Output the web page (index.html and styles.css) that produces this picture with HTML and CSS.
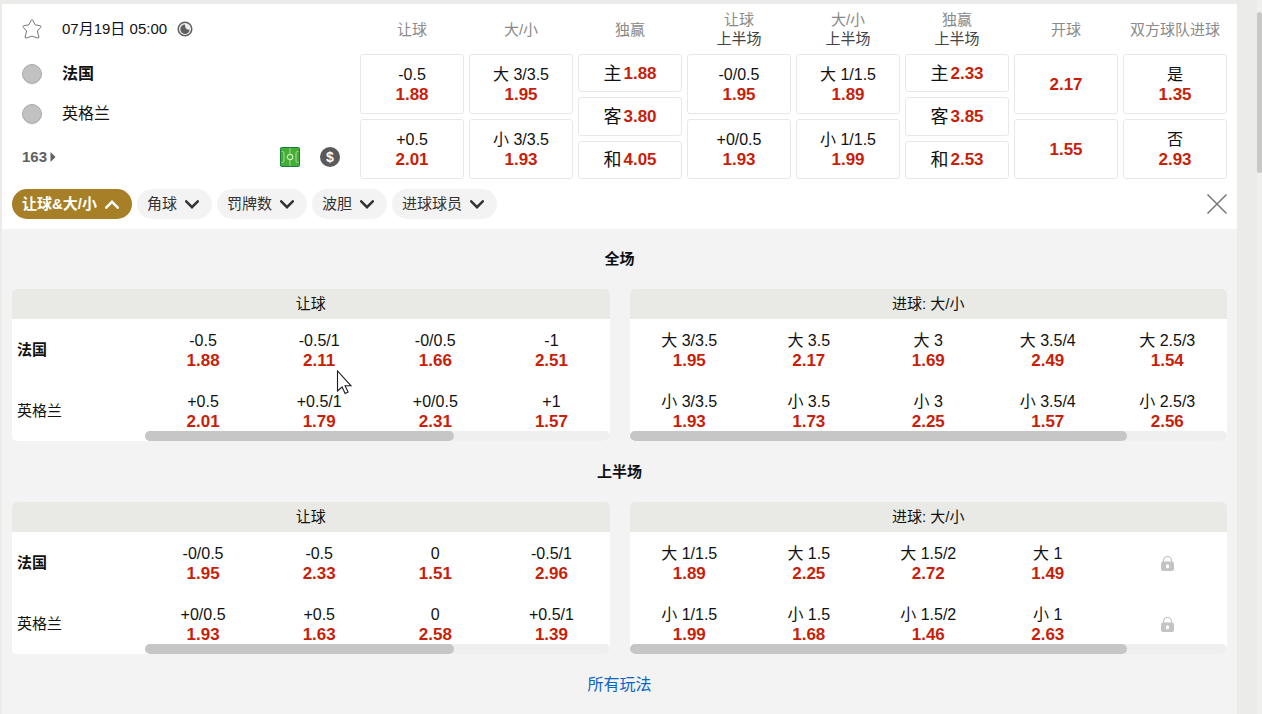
FILE: index.html
```html
<!DOCTYPE html>
<html lang="zh-CN">
<head>
<meta charset="utf-8">
<title>法国 - 英格兰</title>
<link rel="stylesheet" href="styles.css">
</head>
<body>
<svg class="defs" aria-hidden="true">
  <symbol id="down" viewBox="0 0 14 9"><path d="M1.200 1.300 7 7.200l5.800-5.900" fill="none" stroke="currentColor" stroke-width="2.500" stroke-linecap="round"/></symbol>
  <symbol id="up" viewBox="0 0 14 9"><path d="M1.200 7.700 7 1.800l5.800 5.900" fill="none" stroke="currentColor" stroke-width="2.500" stroke-linecap="round"/></symbol>
  <symbol id="lock" viewBox="0 0 13 15"><path d="M2.500 6.500V4.500a4 4 0 0 1 8 0v2" fill="none" stroke="#c4c4c4" stroke-width="1.200"/><rect y="5.500" width="13" height="9.500" rx="2" fill="#c4c4c4"/><rect x="5" y="8.300" width="3" height="4" rx="1.500" fill="#fff"/></symbol>
</svg>
<div class="page">
<main class="board">
  <section class="match">
    <div class="info">
      <div class="kickoff">
        <button class="icon-btn slot" aria-label="收藏"><svg width="20" height="20" viewBox="0 0 20 20"><path d="M9.100 1.300q.9-1.400 1.800 0l2.300 4.600 5 .8q1.500.4.500 1.600l-3.400 3.700 1.600 6q.1 1.400-1.100 1l-5.800-1.800L4.200 19q-1.300.4-1.100-1l1.500-6L1.300 8.300q-1-1.200.4-1.600l5.100-.8z" fill="#fff" stroke="#777" stroke-width="1"/></svg></button>
        <time>07月19日 05:00</time>
        <svg class="clock" width="16" height="16" viewBox="0 0 16 16"><circle cx="8" cy="8" r="6.800" fill="#eee" stroke="#606060" stroke-width="1.500"/><path d="M8 3.500A4.700 4.700 0 1 0 12.700 8.500Q8 9.500 8 3.500z" fill="#606060"/></svg>
      </div>
      <div class="team home"><span class="slot"><i class="crest"></i></span>法国</div>
      <div class="team"><span class="slot"><i class="crest"></i></span>英格兰</div>
      <div class="extras">
        <a class="more" href="#all">163<svg width="6" height="10" viewBox="0 0 6 10"><path d="M.5 0 5.500 5l-5 5z" fill="#606060"/></svg></a>
        <button class="icon-btn" aria-label="比分板"><svg width="20" height="20" viewBox="0 0 20 20"><rect x=".5" y=".5" width="19" height="19" rx="1" fill="#43ad35" stroke="#16803a"/><path d="M1.500 4.500h1q1.500 0 1.500 1.500v8q0 1.500-1.500 1.500h-1M18.500 4.500h-1q-1.500 0-1.500 1.500v8q0 1.500 1.500 1.500h1M10 1v6M10 13v6" fill="none" stroke="#a5dc92"/><circle cx="10" cy="10" r="2.700" fill="none" stroke="#c9efbb" stroke-width="1.200"/></svg></button>
        <button class="icon-btn coin" aria-label="兑现">$</button>
      </div>
    </div>
    <div class="markets">
      <div class="market"><h2>让球</h2><button class="odd"><span>-0.5</span><b>1.88</b></button><button class="odd"><span>+0.5</span><b>2.01</b></button></div>
      <div class="market"><h2>大/小</h2><button class="odd"><span>大 3/3.5</span><b>1.95</b></button><button class="odd"><span>小 3/3.5</span><b>1.93</b></button></div>
      <div class="market win"><h2>独赢</h2><button class="odd"><span>主</span><b>1.88</b></button><button class="odd"><span>客</span><b>3.80</b></button><button class="odd"><span>和</span><b>4.05</b></button></div>
      <div class="market"><h2>让球<small>上半场</small></h2><button class="odd"><span>-0/0.5</span><b>1.95</b></button><button class="odd"><span>+0/0.5</span><b>1.93</b></button></div>
      <div class="market"><h2>大/小<small>上半场</small></h2><button class="odd"><span>大 1/1.5</span><b>1.89</b></button><button class="odd"><span>小 1/1.5</span><b>1.99</b></button></div>
      <div class="market win"><h2>独赢<small>上半场</small></h2><button class="odd"><span>主</span><b>2.33</b></button><button class="odd"><span>客</span><b>3.85</b></button><button class="odd"><span>和</span><b>2.53</b></button></div>
      <div class="market"><h2>开球</h2><button class="odd"><b>2.17</b></button><button class="odd"><b>1.55</b></button></div>
      <div class="market"><h2>双方球队进球</h2><button class="odd"><span>是</span><b>1.35</b></button><button class="odd"><span>否</span><b>2.93</b></button></div>
    </div>
  </section>

  <nav class="tabs">
    <button class="tab active">让球&amp;大/小<svg><use href="#up"/></svg></button>
    <button class="tab">角球<svg><use href="#down"/></svg></button>
    <button class="tab">罚牌数<svg><use href="#down"/></svg></button>
    <button class="tab">波胆<svg><use href="#down"/></svg></button>
    <button class="tab">进球球员<svg><use href="#down"/></svg></button>
    <button class="icon-btn close" aria-label="关闭"><svg width="20" height="20" viewBox="0 0 20 20"><path d="M.5.5l19 19M19.500.5l-19 19" stroke="#777" stroke-width="1.500"/></svg></button>
  </nav>

  <div class="details">
    <section>
      <h3>全场</h3>
      <div class="panels">
        <div class="panel">
          <table>
            <colgroup><col class="name-col"><col><col><col><col></colgroup>
            <thead><tr><th colspan="5">让球</th></tr></thead>
            <tbody>
              <tr><th class="home">法国</th><td><button><span>-0.5</span><b>1.88</b></button></td><td><button><span>-0.5/1</span><b>2.11</b></button></td><td><button><span>-0/0.5</span><b>1.66</b></button></td><td><button><span>-1</span><b>2.51</b></button></td></tr>
              <tr><th>英格兰</th><td><button><span>+0.5</span><b>2.01</b></button></td><td><button><span>+0.5/1</span><b>1.79</b></button></td><td><button><span>+0/0.5</span><b>2.31</b></button></td><td><button><span>+1</span><b>1.57</b></button></td></tr>
            </tbody>
          </table>
          <div class="track named"><div class="thumb two-thirds"></div></div>
        </div>
        <div class="panel">
          <table>
            <thead><tr><th colspan="5">进球: 大/小</th></tr></thead>
            <tbody>
              <tr><td><button><span>大 3/3.5</span><b>1.95</b></button></td><td><button><span>大 3.5</span><b>2.17</b></button></td><td><button><span>大 3</span><b>1.69</b></button></td><td><button><span>大 3.5/4</span><b>2.49</b></button></td><td><button><span>大 2.5/3</span><b>1.54</b></button></td></tr>
              <tr><td><button><span>小 3/3.5</span><b>1.93</b></button></td><td><button><span>小 3.5</span><b>1.73</b></button></td><td><button><span>小 3</span><b>2.25</b></button></td><td><button><span>小 3.5/4</span><b>1.57</b></button></td><td><button><span>小 2.5/3</span><b>2.56</b></button></td></tr>
            </tbody>
          </table>
          <div class="track"><div class="thumb five-sixths"></div></div>
        </div>
      </div>
    </section>
    <section>
      <h3>上半场</h3>
      <div class="panels">
        <div class="panel">
          <table>
            <colgroup><col class="name-col"><col><col><col><col></colgroup>
            <thead><tr><th colspan="5">让球</th></tr></thead>
            <tbody>
              <tr><th class="home">法国</th><td><button><span>-0/0.5</span><b>1.95</b></button></td><td><button><span>-0.5</span><b>2.33</b></button></td><td><button><span>0</span><b>1.51</b></button></td><td><button><span>-0.5/1</span><b>2.96</b></button></td></tr>
              <tr><th>英格兰</th><td><button><span>+0/0.5</span><b>1.93</b></button></td><td><button><span>+0.5</span><b>1.63</b></button></td><td><button><span>0</span><b>2.58</b></button></td><td><button><span>+0.5/1</span><b>1.39</b></button></td></tr>
            </tbody>
          </table>
          <div class="track named"><div class="thumb two-thirds"></div></div>
        </div>
        <div class="panel">
          <table>
            <thead><tr><th colspan="5">进球: 大/小</th></tr></thead>
            <tbody>
              <tr><td><button><span>大 1/1.5</span><b>1.89</b></button></td><td><button><span>大 1.5</span><b>2.25</b></button></td><td><button><span>大 1.5/2</span><b>2.72</b></button></td><td><button><span>大 1</span><b>1.49</b></button></td><td><svg class="lock"><use href="#lock"/></svg></td></tr>
              <tr><td><button><span>小 1/1.5</span><b>1.99</b></button></td><td><button><span>小 1.5</span><b>1.68</b></button></td><td><button><span>小 1.5/2</span><b>1.46</b></button></td><td><button><span>小 1</span><b>2.63</b></button></td><td><svg class="lock"><use href="#lock"/></svg></td></tr>
            </tbody>
          </table>
          <div class="track"><div class="thumb five-sixths"></div></div>
        </div>
      </div>
    </section>
    <a class="all" id="all" href="#all">所有玩法</a>
  </div>
</main>
<div class="page-track"><div class="page-thumb"></div></div>
</div>
<svg class="pointer" width="16" height="25" viewBox="0 0 16 25" aria-hidden="true"><path d="M1.500 1v20l4.600-4 3 6.500 3-1.400-3-6.300h6z" fill="#fff" stroke="#1b1b26" stroke-width="1.100"/></svg>
</body>
</html>
```
FILE: styles.css
```css
* { box-sizing: border-box; }
body {
  margin: 0;
  background: #ebebe9;
  color: #111;
  font: 16px/20px "Liberation Sans", "Noto Sans CJK SC", sans-serif;
}
button { margin: 0; padding: 0; border: 0; background: none; color: inherit; font: inherit; cursor: pointer; }
a { text-decoration: none; }
svg { display: block; flex: none; }
h2, h3 { margin: 0; }
.defs { position: absolute; width: 0; height: 0; }

.page { display: flex; min-height: 100vh; }
.board { flex: 1; display: flex; flex-direction: column; min-width: 0; margin: 4px 20px 0 2px; background: #fff; }
.page-track { width: 5px; padding-top: 12px; background: #f0f0f0; }
.page-thumb { height: 161px; border-radius: 3px; background: #c8c8c8; }

.match { display: flex; padding-right: 10px; }
.info { flex: none; width: 358px; padding: 0 20px; }
.slot { display: flex; width: 40px; }
.icon-btn { flex: none; }
.kickoff { display: flex; align-items: center; height: 50px; font-size: 15px; }
.clock { margin-left: 10px; }
.team { display: flex; align-items: center; height: 40px; }
.home { font-weight: bold; }
.crest { width: 20px; height: 20px; border: 1px solid #aaa; border-radius: 50%; background: #c1c1c1; }
.extras { display: flex; align-items: center; gap: 20px; height: 45px; }
.more { display: flex; align-items: center; gap: 3px; margin-right: auto; color: #606060; font-size: 15px; font-weight: bold; }
.coin { width: 20px; height: 20px; border-radius: 50%; background: #5a5a5a; color: #fff; font-size: 14px; font-weight: bold; text-align: center; }

.markets { display: grid; flex: 1; grid-template-columns: repeat(8, 1fr); gap: 5px; }
.market { display: flex; flex-direction: column; gap: 5px; height: 175px; min-width: 0; }
.market h2 { display: flex; flex-direction: column; justify-content: center; align-items: center; height: 50px; margin-bottom: -5px; color: #8a8a8a; font-size: 15px; font-weight: normal; line-height: 19px; white-space: nowrap; }
.market small { color: #444; font-size: 15px; }
.odd { display: flex; flex: 1; flex-direction: column; justify-content: center; align-items: center; padding-top: 1px; border: 1px solid #e8e8e8; border-radius: 3px; }
.win .odd { flex-direction: row; align-items: center; gap: 2px; }
.win span { font-size: 18px; }
b { color: #c81e0a; font-size: 17px; }

.tabs { display: flex; align-items: center; gap: 5px; padding: 10px; }
.tab { display: flex; align-items: center; gap: 8px; height: 30px; padding: 0 13px 0 10px; border-radius: 15px; background: #f3f3f3; color: #333; font-size: 15px; white-space: nowrap; }
.tab svg { width: 14px; height: 9px; }
.active { background: #a67f26; color: #fff; font-weight: bold; }
.close { margin-left: auto; }

.details { display: flex; flex: 1; flex-direction: column; gap: 1px; padding: 0 10px; background: #f3f3f3; }
h3 { font-size: 15px; line-height: 60px; text-align: center; }
.panels { display: grid; grid-template-columns: 1fr 1fr; gap: 20px; }
.panel { position: relative; overflow: hidden; border-radius: 5px; background: #fff; }
table { width: 100%; border-collapse: collapse; table-layout: fixed; }
.name-col { width: 133px; }
thead th { height: 30px; padding: 0; background: #e9eae5; font-size: 15px; font-weight: normal; }
tbody th { padding: 0 0 0 5px; font-size: 15px; font-weight: normal; text-align: left; }
tbody .home { font-weight: bold; }
td { height: 61px; padding: 2px 0 0; text-align: center; }
td button { display: flex; flex-direction: column; align-items: center; width: 100%; }
.lock { width: 13px; height: 15px; margin: 0 auto; }
.track { position: absolute; right: 0; bottom: 0; left: 0; height: 10px; border-radius: 5px; background: #efefef; }
.named { left: 133px; }
.thumb { height: 10px; border-radius: 5px; background: #c6c6c6; }
.two-thirds { width: 66.6%; }
.five-sixths { width: 83.3%; }
.all { align-self: center; color: #0b64c8; line-height: 60px; }

.pointer { position: absolute; top: 370px; left: 336px; }
```
